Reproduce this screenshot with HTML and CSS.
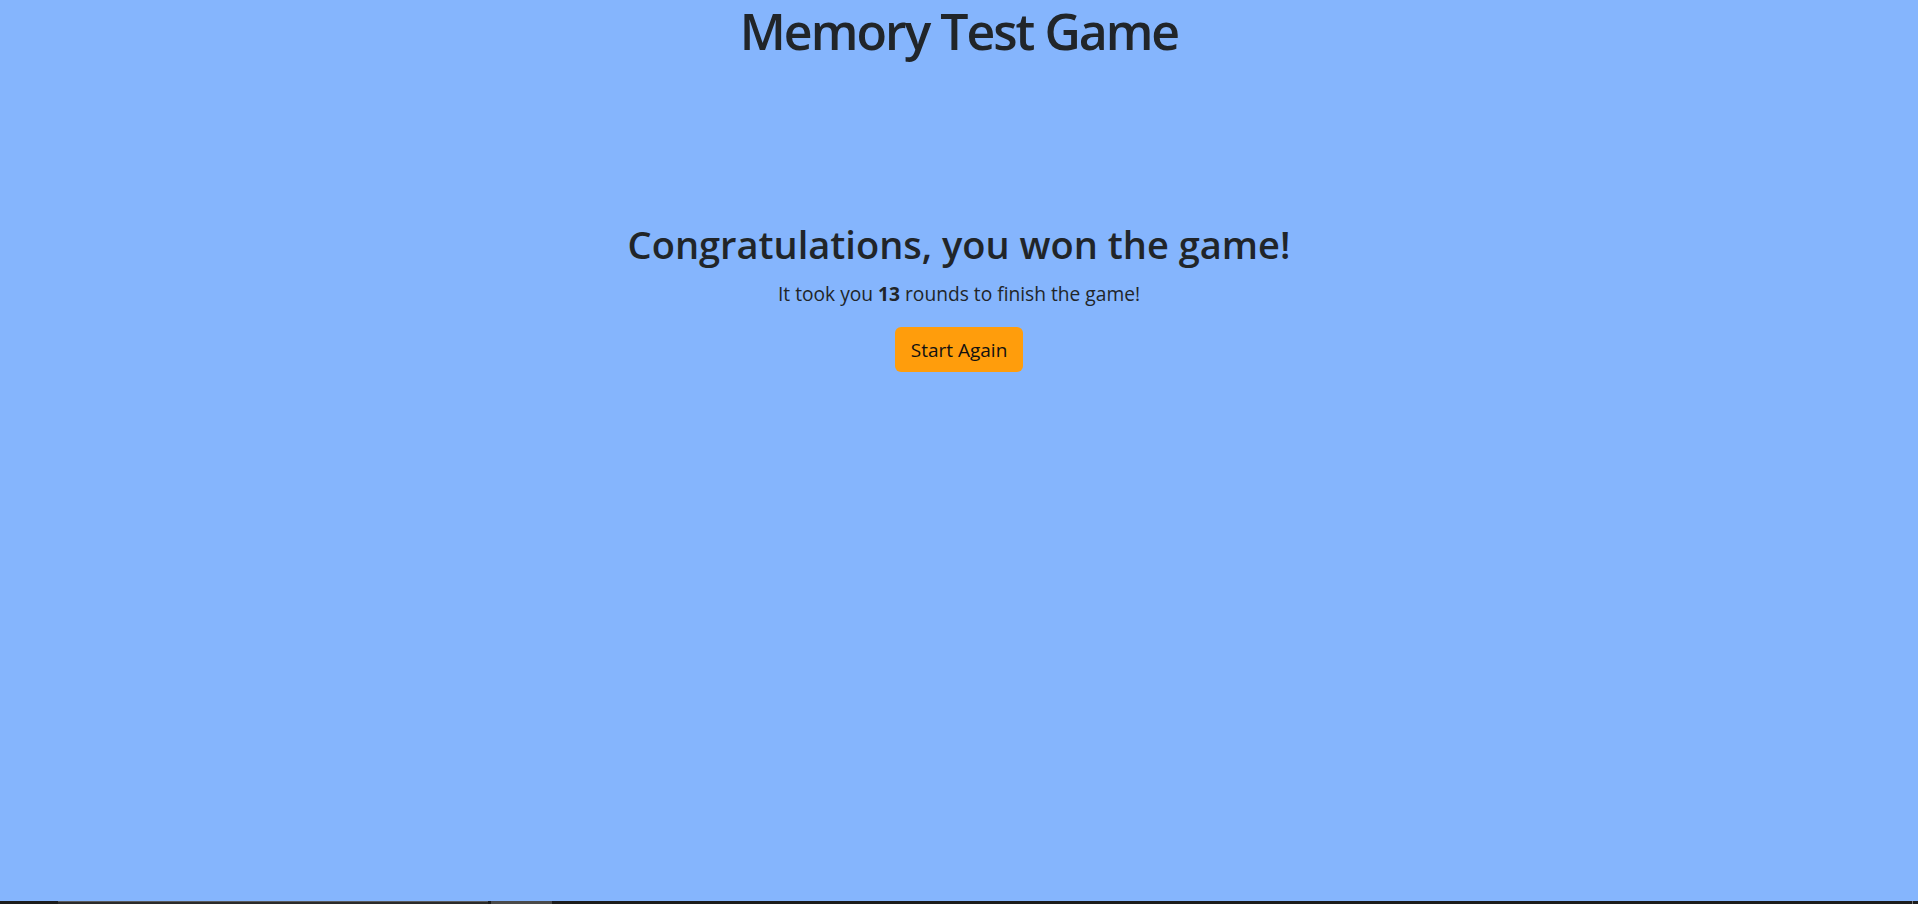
FILE: index.html
```html
<!DOCTYPE html>
<html lang="en">
<head>
<meta charset="utf-8">
<title>Memory Test Game</title>
<link rel="stylesheet" href="styles.css">
</head>
<body>
<div class="page">
  <main class="app">
    <h1 class="title">Memory Test Game</h1>
    <section class="result">
      <h2 class="result-heading">Congratulations, you won the game!</h2>
      <p class="result-text">It took you <strong>13</strong> rounds to finish the game!</p>
      <button class="btn-restart" type="button">Start Again</button>
    </section>
  </main>
  <footer class="taskbar">
    <span class="tb-gap-left"></span>
    <span class="tb-window"></span>
    <span class="tb-gap"></span>
    <span class="tb-tab"></span>
    <span class="tb-fill"></span>
    <span class="tb-tick"></span>
  </footer>
</div>
</body>
</html>
```
FILE: styles.css
```css
* { box-sizing: border-box; }
html, body { margin: 0; padding: 0; }
body {
  background: #85b5fd;
  color: #212529;
  font-family: "Open Sans", "Noto Sans", sans-serif;
}
.page {
  min-height: 100vh;
  display: flex;
  flex-direction: column;
}
.app {
  flex: 1;
  display: flex;
  flex-direction: column;
  align-items: center;
}
.title {
  margin: 0;
  padding-top: 1px;
  font-size: 50px;
  font-weight: 600;
  line-height: 60px;
  letter-spacing: -2px;
  text-align: center;
}
.result {
  margin-top: 160px;
  display: flex;
  flex-direction: column;
  align-items: center;
}
.result-heading {
  margin: 0;
  font-size: 38px;
  font-weight: 600;
  line-height: 46px;
}
.result-text {
  margin: 12px 0 0;
  font-size: 19.2px;
  line-height: 30px;
}
.result-text strong { font-weight: 700; }
.btn-restart {
  margin-top: 18px;
  height: 45px;
  padding: 0 16px;
  border: 0;
  border-radius: 6px;
  background: #ff9d0c;
  color: #111;
  font-family: inherit;
  font-size: 19px;
  line-height: 30px;
  cursor: pointer;
}
.taskbar {
  height: 3px;
  display: flex;
  background: #1c1c1c;
}
.tb-gap-left { width: 58px; }
.tb-window { width: 430px; background: #2b2b2b; border-top: 1px solid #5a5a5a; }
.tb-gap { width: 3px; }
.tb-tab { width: 61px; background: #4a4a4a; }
.tb-fill { flex: 1; }
.tb-tick { width: 1px; margin-right: 5px; background: #777; }
```
